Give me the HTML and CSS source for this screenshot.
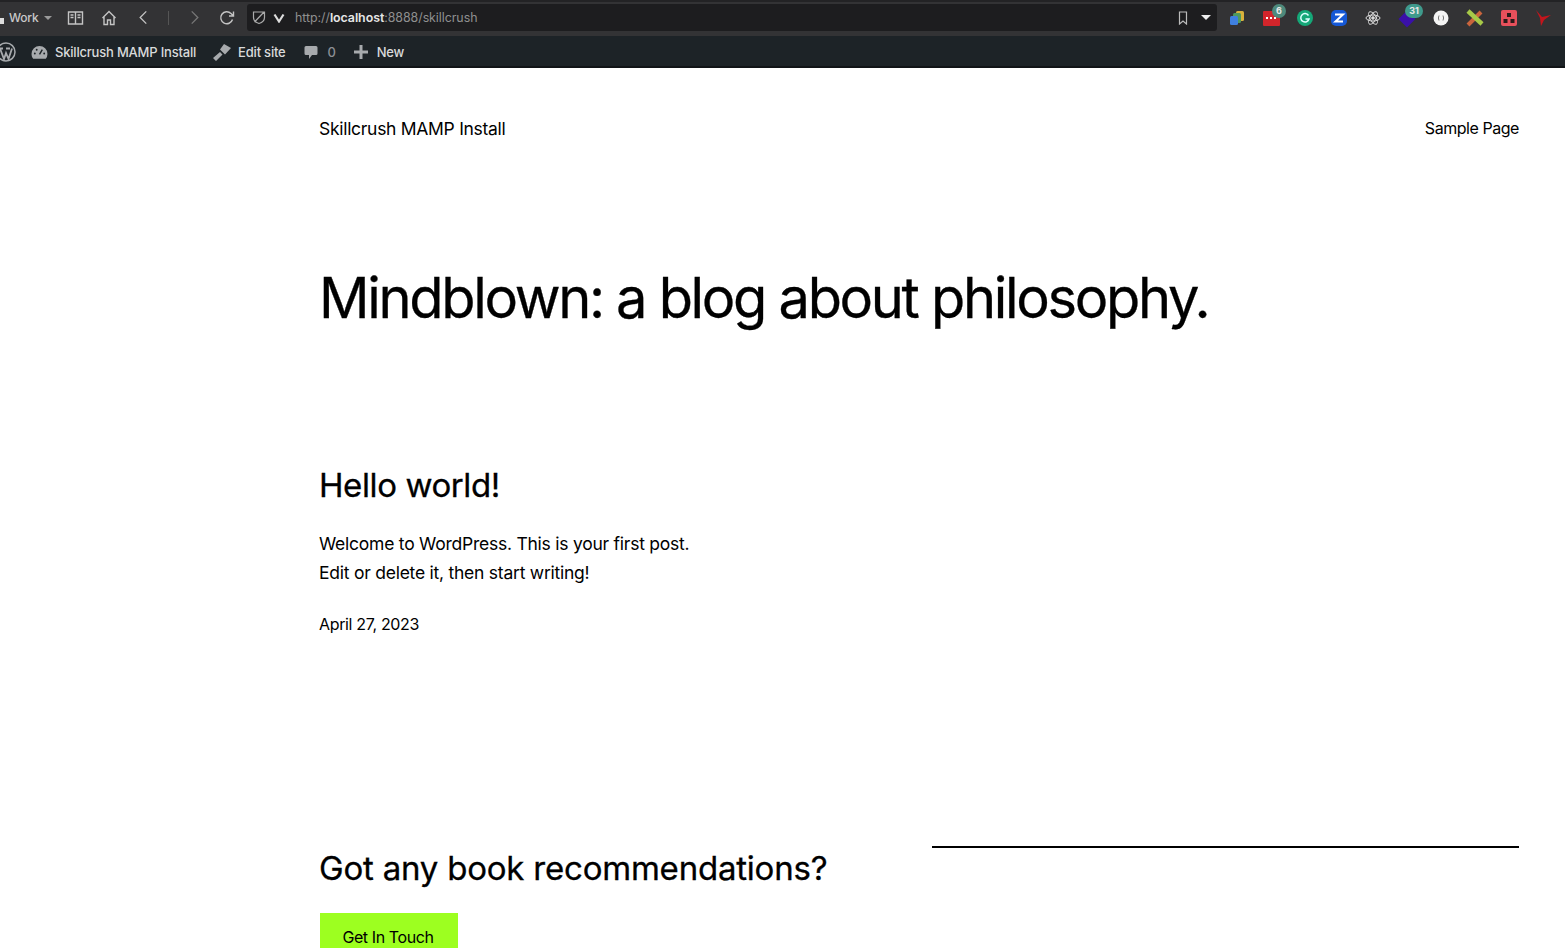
FILE: index.html
```html
<!DOCTYPE html>
<html lang="en">
<head>
<meta charset="utf-8">
<title>Skillcrush MAMP Install</title>
<link rel="stylesheet" href="styles.css">
</head>
<body>
<div class="toolbar">
  <div class="profile"><span class="profile-edge"></span><span>Work</span><i class="caret"></i></div>
  <svg class="tb-icon book" viewBox="0 0 16 14"><path d="M1 1h14v12H1zM8 1v12M3 4h3M3 6.500h3M10 4h3M10 6.500h3" /></svg>
  <svg class="tb-icon home" viewBox="0 0 16 16"><path d="M1.500 8 8 1.500 14.500 8M3 7v7.500h3.500V10h3v4.500H13V7" /></svg>
  <svg class="tb-icon back" viewBox="0 0 10 16"><path d="M8.500 1.500 2 8l6.500 6.500" /></svg>
  <span class="sep"></span>
  <svg class="tb-icon fwd" viewBox="0 0 10 16"><path d="M1.500 1.500 8 8l-6.500 6.500" /></svg>
  <svg class="tb-icon reload" viewBox="0 0 16 16"><path d="M13.500 9.500A6 6 0 1 1 12 3.500L14 5.500M14.500 1.500v4.500H10" /></svg>
  <div class="address">
    <svg class="shield" viewBox="0 0 14 15"><path d="M1.500 2h11v5.500c0 3-2.500 5-5.500 6-3-1-5.500-3-5.500-6zM2.500 12 12 2" /></svg>
    <svg class="vee" viewBox="0 0 12 10"><path d="M1.500 1.500 6 8.500l4.500-7" /></svg>
    <span class="url">http://<b>localhost</b>:8888/skillcrush</span>
    <span class="address-end">
      <svg class="bookmark" viewBox="0 0 10 14"><path d="M1.500 1h7v12L5 10l-3.500 3z" /></svg>
      <i class="caret caret-white"></i>
    </span>
  </div>
  <div class="extensions">
    <span class="ext"><svg viewBox="0 0 16 16"><rect x="7" y="1" width="8" height="10" rx="1.500" fill="#d9b23c"/><rect x="4" y="3" width="8" height="10" rx="1.500" fill="#4f9a5e"/><rect x="1" y="6" width="8" height="9" rx="1.500" fill="#3f80e0"/></svg></span>
    <span class="ext"><svg viewBox="0 0 16 16"><rect y="1" width="17" height="15" rx="1" fill="#d2252b"/><path d="M3 8h2M7 8h2M11 8h2" stroke="#fff" stroke-width="2"/></svg><span class="badge">6</span></span>
    <span class="ext"><svg viewBox="0 0 16 16"><circle cx="8" cy="8" r="8" fill="#15a878"/><path d="M11.500 5.500A4.200 4.200 0 1 0 12 9H8.500" fill="none" stroke="#dff" stroke-width="1.500"/></svg></span>
    <span class="ext"><svg viewBox="0 0 16 16"><rect width="16" height="16" rx="5" fill="#1558d6"/><path d="M4 4.500h8L4.500 11.500H12" fill="none" stroke="#fff" stroke-width="2"/></svg></span>
    <span class="ext"><svg viewBox="0 0 16 16" fill="none" stroke="#d8d8d8"><ellipse cx="8" cy="8" rx="7" ry="3"/><ellipse cx="8" cy="8" rx="7" ry="3" transform="rotate(60 8 8)"/><ellipse cx="8" cy="8" rx="7" ry="3" transform="rotate(120 8 8)"/><circle cx="8" cy="8" r="1.300" fill="#d8d8d8"/></svg></span>
    <span class="ext"><svg viewBox="0 0 16 16"><rect x="2" y="3" width="12" height="12" transform="rotate(45 8 9)" fill="#3a10a8"/></svg><span class="badge badge-wide">31</span></span>
    <span class="ext"><svg viewBox="0 0 16 16"><circle cx="8" cy="8" r="7.500" fill="#f4f4f4"/><path d="M6 5.500Q4.800 8 6 10.500M10 5.500Q11.200 8 10 10.500" fill="none" stroke="#777"/></svg></span>
    <span class="ext"><svg viewBox="0 0 16 16"><path d="M1 15 14 2" stroke="#c9643c" stroke-width="4"/><path d="M1 1 15 14" stroke="#a7c948" stroke-width="4.500"/></svg></span>
    <span class="ext"><svg viewBox="0 0 16 16"><rect width="16" height="16" rx="2" fill="#e8505b"/><rect x="6" y="3" width="4" height="4" fill="#2a1a1a"/><rect x="2.500" y="9" width="4" height="4" fill="#2a1a1a"/><rect x="9.500" y="9" width="4" height="4" fill="#2a1a1a"/></svg></span>
    <span class="ext"><svg viewBox="0 0 16 16"><path d="M1 0 7 7 16 5 9 10 6 16 5 8z" fill="#c3151c"/></svg></span>
  </div>
</div>
<div class="adminbar">
  <svg class="wp" viewBox="0 0 20 20"><circle cx="10" cy="10" r="9" fill="none" stroke="#a7aaad" stroke-width="1.500"/><path d="M4 6.500 8 17l2-6 2.500 6L16 6.500M3 6.500h4M10 6.500h4" fill="none" stroke="#a7aaad" stroke-width="1.800"/></svg>
  <div class="admin-item site"><svg viewBox="0 0 18 16"><path d="M9 1a8.500 8.500 0 0 0-8.500 8.500c0 2 .7 3.800 1.800 5.200h13.400a8.500 8.500 0 0 0 1.800-5.200A8.500 8.500 0 0 0 9 1z" fill="#a7aaad"/><path d="M9 10l3-5" stroke="#1d2327" stroke-width="1.500"/><circle cx="4" cy="9" r="1" fill="#1d2327"/><circle cx="6" cy="5" r="1" fill="#1d2327"/><circle cx="14" cy="9" r="1" fill="#1d2327"/></svg><span>Skillcrush MAMP Install</span></div>
  <div class="admin-item edit"><svg viewBox="0 0 18 18"><path d="M0 15 7 9l2.500 2.500L3 18zM7 6.500l4-5.500 7 4-6 6.500z" fill="#a7aaad"/></svg><span>Edit site</span></div>
  <div class="admin-item comments"><svg viewBox="0 0 14 15"><path d="M2 1h10a1.500 1.500 0 0 1 1.500 1.500v6A1.500 1.500 0 0 1 12 10H8l-3 4v-4H2A1.500 1.500 0 0 1 .5 8.500v-6A1.500 1.500 0 0 1 2 1z" fill="#a7aaad"/></svg><span class="count">0</span></div>
  <div class="admin-item new"><svg viewBox="0 0 14 14"><path d="M7 0v14M0 7h14" stroke="#a7aaad" stroke-width="3"/></svg><span>New</span></div>
</div>
<main class="page">
  <header class="site-header">
    <a class="site-title">Skillcrush MAMP Install</a>
    <a class="nav-link">Sample Page</a>
  </header>
  <h1 class="blog-title">Mindblown: a blog about philosophy.</h1>
  <article class="post">
    <h2 class="post-title">Hello world!</h2>
    <p class="post-text">Welcome to WordPress. This is your first post.<br>Edit or delete it, then start writing!</p>
    <p class="post-date">April 27, 2023</p>
  </article>
  <section class="cta">
    <div class="cta-left">
      <h2 class="cta-title">Got any book recommendations?</h2>
      <a class="cta-button">Get In Touch</a>
    </div>
    <div class="cta-right"></div>
  </section>
</main>
</body>
</html>
```
FILE: styles.css
```css
* { box-sizing: border-box; }
html, body { margin: 0; height: 948px; overflow: hidden; background: #fff; }
body { font-family: Inter, "Liberation Sans", sans-serif; color: #000; }

.toolbar {
  height: 36px;
  background: #333335;
  border-top: 2px solid #232325;
  padding-bottom: 3px;
  display: flex;
  align-items: center;
}
.profile { display: flex; align-items: center; color: #c9c9c9; font-size: 12px; font-weight: 500; letter-spacing: -0.2px; width: 67px; flex: none; }
.profile-edge { width: 4px; height: 12px; margin-right: 5px; background: linear-gradient(#333 0 50%, #ddd 50%); }
.caret { width: 0; height: 0; margin-left: 6px; border: 4px solid transparent; border-top: 4px solid #9a9a9a; border-bottom: 0; }
.caret-white { border-top-color: #eee; margin-left: 13px; border-width: 5px 5px 0; }

.tb-icon { fill: none; stroke: #c4c4c4; stroke-width: 1.400; flex: none; }
.book { width: 17px; height: 14px; }
.home { width: 16px; height: 16px; margin-left: 17px; }
.back { width: 10px; height: 15px; margin-left: 21px; }
.sep { width: 1px; height: 14px; background: #555; margin-left: 20px; flex: none; }
.fwd { width: 10px; height: 15px; margin-left: 21px; stroke: #777; }
.reload { width: 16px; height: 16px; margin-left: 19px; }

.address {
  width: 970px;
  height: 27px;
  margin-left: 12px;
  background: #1d1d1f;
  border-radius: 3px;
  display: flex;
  align-items: center;
  padding: 0 6px 0 5px;
  flex: none;
}
.shield { width: 14px; height: 15px; fill: none; stroke: #aaa; stroke-width: 1.200; }
.vee { width: 12px; height: 10px; margin-left: 7px; fill: none; stroke: #ddd; stroke-width: 2.200; }
.url { margin-left: 10px; font-size: 12.400px; letter-spacing: -0.050px; color: #8f8f8f; }
.url b { font-weight: 600; color: #e6e6e6; }
.address-end { margin-left: auto; display: flex; align-items: center; }
.bookmark { width: 10px; height: 14px; fill: none; stroke: #bbb; stroke-width: 1.200; }

.extensions { display: flex; margin-left: 12px; flex: none; }
.ext { width: 16px; height: 16px; margin-right: 18px; position: relative; flex: none; }
.ext svg { display: block; width: 16px; height: 16px; overflow: visible; }
.badge {
  position: absolute;
  top: -6px;
  right: -7px;
  width: 14px;
  height: 14px;
  border-radius: 50%;
  background: #4e8a7c;
  color: #e8e8e8;
  font-size: 9px;
  font-weight: 700;
  line-height: 14px;
  text-align: center;
}
.badge-wide { width: 18px; right: -8px; border-radius: 7px; background: #3f9a8c; }

.adminbar {
  height: 32px;
  background: #1d2327;
  border-bottom: 2px solid #111417;
  padding-top: 2px;
  display: flex;
  align-items: center;
  color: #d9dadb;
  font-size: 13px;
  font-weight: 500;
  letter-spacing: -0.200px;
}
.wp { width: 20px; height: 20px; margin-left: -4px; flex: none; }
.admin-item { display: flex; align-items: center; }
.admin-item svg { flex: none; }
.site { margin-left: 15px; }
.site svg { width: 17px; height: 15px; margin-right: 7px; }
.edit { margin-left: 17px; }
.edit svg { width: 18px; height: 18px; margin-right: 7px; }
.comments { margin-left: 18px; }
.comments svg { width: 14px; height: 15px; margin-right: 10px; }
.count { color: #8c8f94; }
.new { margin-left: 18px; }
.new svg { width: 14px; height: 14px; margin-right: 9px; }

.page { padding: 0 46px 0 319px; }
.site-header {
  display: flex;
  justify-content: space-between;
  padding-top: 48px;
  font-size: 17.500px;
  line-height: 24px;
  letter-spacing: -0.290px;
}
.site-title { line-height: 26px; height: 24px; }
.nav-link { font-size: 16px; letter-spacing: -0.450px; }
.blog-title {
  margin: 124px 0 0;
  font-size: 56px;
  line-height: 68px;
  font-weight: 400;
  letter-spacing: -2.330px;
  -webkit-text-stroke: 0.3px #000;
}
.post { padding-top: 133px; }
.post-title { margin: 0; font-size: 33px; line-height: 40px; font-weight: 400; letter-spacing: -0.400px; -webkit-text-stroke: 0.3px #000; }
.post-text { margin: 24px 0 0; font-size: 17.500px; line-height: 29px; letter-spacing: -0.240px; }
.post-date { margin: 26px 0 0; font-size: 16px; line-height: 22px; letter-spacing: -0.340px; }

.cta { display: flex; margin-top: 213px; }
.cta-left { width: 613px; flex: none; }
.cta-right { flex: 1; height: 2px; margin-top: -2px; background: #000; }
.cta-title { margin: 0; font-size: 33px; line-height: 40px; font-weight: 400; letter-spacing: -0.210px; -webkit-text-stroke: 0.3px #000; }
.cta-button {
  display: block;
  width: 138px;
  height: 48px;
  margin: 25px 0 0 1px;
  padding: 14px 2px 0 0;
  background: #9dff20;
  font-size: 16px;
  letter-spacing: -0.400px;
  text-align: center;
  line-height: 20px;
}
```
